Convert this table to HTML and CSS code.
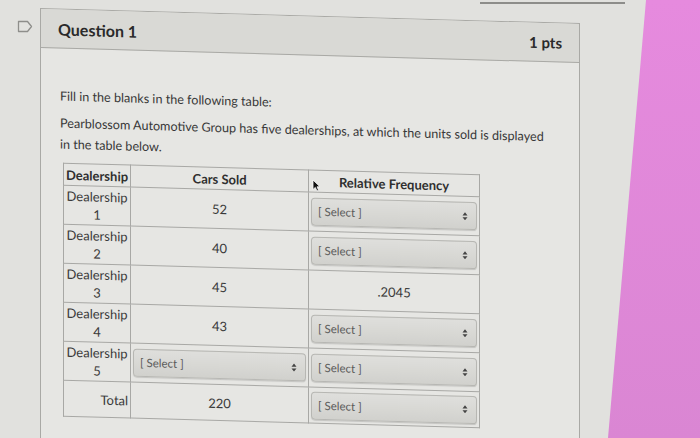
FILE: index.html
```html
<!DOCTYPE html>
<html lang="en">
<head>
<meta charset="utf-8">
<title>Question 1</title>
<link rel="stylesheet" href="styles.css">
</head>
<body>
<div class="screen">
  <div class="main">
    <div class="prev-edge"></div>
    <div class="row">
      <div class="gutter">
        <svg class="flag" width="16" height="13" viewBox="0 0 16 13"><path d="M1.5 1.5 H10.5 L14.5 6.5 L10.5 11.5 H1.5 Z" fill="#e3e3e0" stroke="#8e8e8b" stroke-width="1.3" stroke-linejoin="round"/></svg>
      </div>
      <section class="card">
        <header class="card-head">
          <h2 class="q-title">Question 1</h2>
          <span class="pts">1 pts</span>
        </header>
        <div class="card-body">
          <p class="para">Fill in the blanks in the following table:</p>
          <p class="para intro">Pearblossom Automotive Group has five dealerships, at which the units sold is displayed in the table below.</p>
          <table class="data">
            <thead>
              <tr>
                <th class="c1">Dealership</th>
                <th class="c2">Cars Sold</th>
                <th class="c3">Relative Frequency</th>
              </tr>
            </thead>
            <tbody>
              <tr>
                <td class="name">Dealership<br>1</td>
                <td class="num">52</td>
                <td class="pick"><div class="sel"><span>[ Select ]</span><svg class="arr" width="6" height="9" viewBox="0 0 6 9"><path d="M0.5 3.6 L3 0.5 L5.5 3.6Z M0.5 5.4 L3 8.5 L5.5 5.4Z" fill="#444"/></svg></div></td>
              </tr>
              <tr>
                <td class="name">Dealership<br>2</td>
                <td class="num">40</td>
                <td class="pick"><div class="sel"><span>[ Select ]</span><svg class="arr" width="6" height="9" viewBox="0 0 6 9"><path d="M0.5 3.6 L3 0.5 L5.5 3.6Z M0.5 5.4 L3 8.5 L5.5 5.4Z" fill="#444"/></svg></div></td>
              </tr>
              <tr>
                <td class="name">Dealership<br>3</td>
                <td class="num">45</td>
                <td class="num val">.2045</td>
              </tr>
              <tr>
                <td class="name">Dealership<br>4</td>
                <td class="num">43</td>
                <td class="pick"><div class="sel"><span>[ Select ]</span><svg class="arr" width="6" height="9" viewBox="0 0 6 9"><path d="M0.5 3.6 L3 0.5 L5.5 3.6Z M0.5 5.4 L3 8.5 L5.5 5.4Z" fill="#444"/></svg></div></td>
              </tr>
              <tr>
                <td class="name">Dealership<br>5</td>
                <td class="pick"><div class="sel"><span>[ Select ]</span><svg class="arr" width="6" height="9" viewBox="0 0 6 9"><path d="M0.5 3.6 L3 0.5 L5.5 3.6Z M0.5 5.4 L3 8.5 L5.5 5.4Z" fill="#444"/></svg></div></td>
                <td class="pick"><div class="sel"><span>[ Select ]</span><svg class="arr" width="6" height="9" viewBox="0 0 6 9"><path d="M0.5 3.6 L3 0.5 L5.5 3.6Z M0.5 5.4 L3 8.5 L5.5 5.4Z" fill="#444"/></svg></div></td>
              </tr>
              <tr class="total">
                <td class="tot">Total</td>
                <td class="num">220</td>
                <td class="pick"><div class="sel"><span>[ Select ]</span><svg class="arr" width="6" height="9" viewBox="0 0 6 9"><path d="M0.5 3.6 L3 0.5 L5.5 3.6Z M0.5 5.4 L3 8.5 L5.5 5.4Z" fill="#444"/></svg></div></td>
              </tr>
            </tbody>
          </table>
        </div>
      </section>
    </div>
  </div>
  <div class="pink"></div>
  <svg class="cursor" width="9" height="13" viewBox="0 0 9 13"><path d="M1 1 L1 10.5 L3.3 8.4 L5 12 L6.6 11.3 L5 7.8 L8 7.8 Z" fill="#111" stroke="#fff" stroke-width="0.8" stroke-linejoin="round"/></svg>
</div>
</body>
</html>
```

FILE: styles.css
```css
html, body {
  margin: 0;
  padding: 0;
}

body {
  width: 700px;
  height: 438px;
  overflow: hidden;
  background: #e1e1de;
  font-family: Lato, "Noto Sans", sans-serif;
  color: #353535;
}

.screen {
  position: relative;
  display: flex;
  height: 438px;
}

.main {
  flex: 1;
  display: flex;
  flex-direction: column;
  min-width: 0;
}

.prev-edge {
  height: 0;
  border-top: 2px solid #8d8d8a;
  margin: 2px -17px 0 480px;
}

.row {
  flex: 1;
  display: flex;
  padding-top: 4px;
}

.gutter {
  width: 40px;
  flex: none;
}

.flag {
  display: block;
  margin: 12px 0 0 17px;
}

.card {
  box-sizing: border-box;
  width: 540px;
  flex: none;
  border: 1px solid #a9a9a5;
  border-bottom: 0;
  background: #e6e6e3;
  transform: skewY(1.6deg);
  transform-origin: 0 0;
}

.card-head {
  box-sizing: border-box;
  height: 39px;
  display: flex;
  align-items: center;
  justify-content: space-between;
  padding: 0 17px;
  background: #d9d9d5;
  border-bottom: 1px solid #a9a9a5;
}

.q-title {
  margin: 0;
  font-size: 16px;
  font-weight: 700;
  color: #2a2a2a;
}

.pts {
  font-size: 15px;
  font-weight: 700;
  color: #2a2a2a;
}

.card-body {
  padding: 37px 0 0 19px;
}

.para {
  margin: 0 0 6px;
  font-size: 12.6px;
  line-height: 21px;
  max-width: 486px;
  color: #383838;
}

.intro {
  margin-bottom: 8px;
}

.data {
  border-collapse: collapse;
  margin-left: 3px;
  font-size: 13px;
  line-height: 18px;
  border: 1px solid #8d8d8a;
  color: #3a3a3a;
}

.data th,
.data td {
  border: 1px solid #a8a8a5;
  padding: 1px 2px;
}

.data th {
  font-weight: 700;
  height: 19px;
  color: #2f2f2f;
}

.c1 {
  width: 58px;
  text-align: left;
}

.c2 {
  width: 173px;
  text-align: center;
}

.c3 {
  width: 166px;
  text-align: center;
}

.name {
  text-align: center;
  height: 36px;
}

.num {
  text-align: center;
}

.tot {
  text-align: right;
  height: 33px;
}

.pick {
  padding: 0 1px;
}

.sel {
  box-sizing: border-box;
  height: 28px;
  display: flex;
  align-items: center;
  justify-content: space-between;
  padding: 0 8px 0 6px;
  border: 1px solid #b7b7b3;
  border-radius: 4px;
  background: linear-gradient(#dfdfdc, #d1d1cd);
  box-shadow: 0 1px 1px rgba(0, 0, 0, 0.15);
  font-size: 11.5px;
  color: #5a5a5a;
}

.arr {
  display: block;
}

.pink {
  width: 92px;
  flex: none;
  background: linear-gradient(#e68ade, #da86d3);
  clip-path: polygon(38px 0, 100% 0, 100% 100%, 0 100%);
}

.cursor {
  position: absolute;
  left: 312px;
  top: 179px;
}
```
